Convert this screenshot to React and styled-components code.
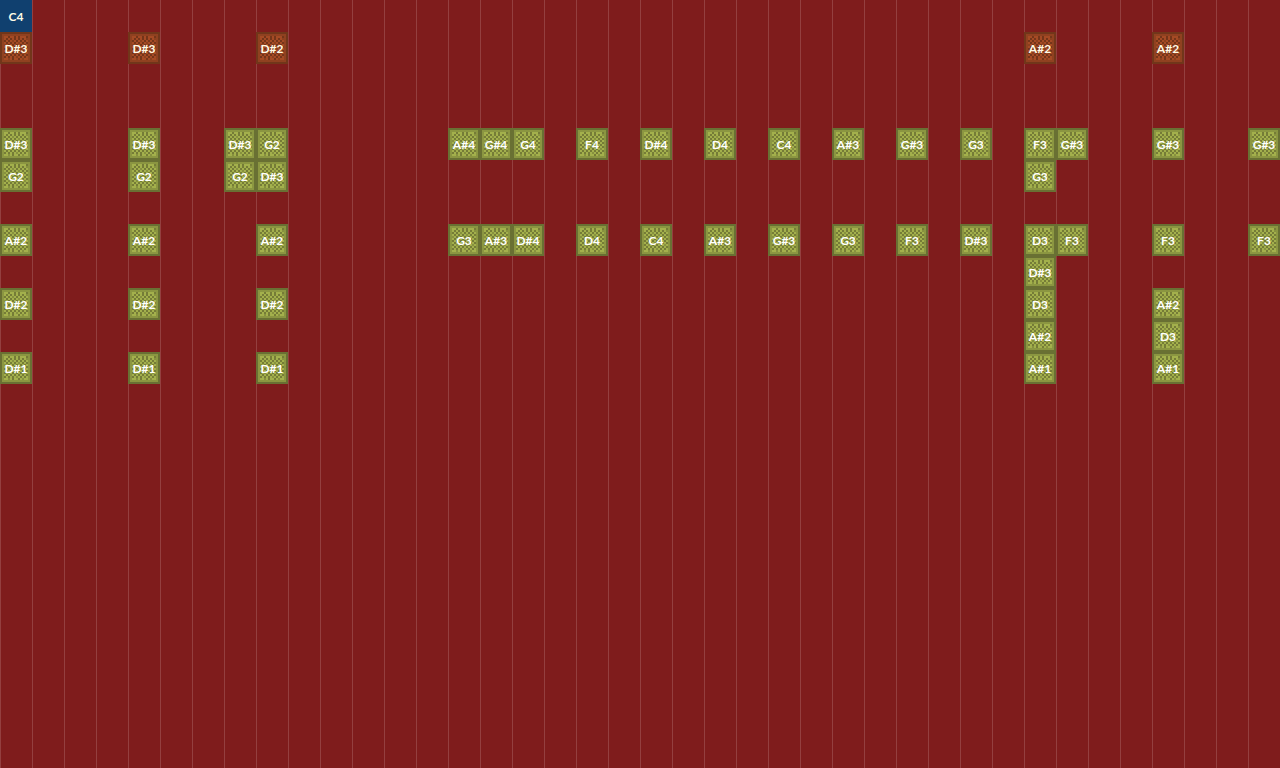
import React from "react";
import styled, { createGlobalStyle } from "styled-components";

const GlobalStyle = createGlobalStyle`
  body {
    margin: 0;
    background: #7f1c1c;
    overflow: hidden;
  }
`;

// 16x16 block texture, one letter per texel
const TEXTURE = [
  "dddddddddddddddd",
  "dffffffffffffffd",
  "dfllkllklklllkfd",
  "dflklklklklklmfd",
  "dfklklmlklklklfd",
  "dflklklklmlklkfd",
  "dfmlklklklklklfd",
  "dflklmlklklklkfd",
  "dfklklklklmlklfd",
  "dflklklmlklklkfd",
  "dfklmlklklklmlfd",
  "dflklklklklklkfd",
  "dfklklklmlklklfd",
  "dfllmlkllklmllfd",
  "dffffffffffffffd",
  "dddddddddddddddd",
];

const PALETTES = {
  green: { d: "#697033", k: "#757c37", m: "#87913f", f: "#8b9641", l: "#a3b04c" },
  orange: { d: "#71361a", k: "#74351a", m: "#8c401e", f: "#904120", l: "#a54a24" },
};

// every layer is one list of notes, each at a tick
const LAYERS = [
  { color: "blue", notes: { 0: "C4" } },
  { color: "orange", notes: { 0: "D#3", 4: "D#3", 8: "D#2", 32: "A#2", 36: "A#2" } },
  { notes: {} },
  { notes: {} },
  {
    color: "green",
    notes: {
      0: "D#3", 4: "D#3", 7: "D#3", 8: "G2", 14: "A#4", 15: "G#4", 16: "G4",
      18: "F4", 20: "D#4", 22: "D4", 24: "C4", 26: "A#3", 28: "G#3", 30: "G3",
      32: "F3", 33: "G#3", 36: "G#3", 39: "G#3",
    },
  },
  { color: "green", notes: { 0: "G2", 4: "G2", 7: "G2", 8: "D#3", 32: "G3" } },
  { notes: {} },
  {
    color: "green",
    notes: {
      0: "A#2", 4: "A#2", 8: "A#2", 14: "G3", 15: "A#3", 16: "D#4", 18: "D4",
      20: "C4", 22: "A#3", 24: "G#3", 26: "G3", 28: "F3", 30: "D#3", 32: "D3",
      33: "F3", 36: "F3", 39: "F3",
    },
  },
  { color: "green", notes: { 32: "D#3" } },
  { color: "green", notes: { 0: "D#2", 4: "D#2", 8: "D#2", 32: "D3", 36: "A#2" } },
  { color: "green", notes: { 32: "A#2", 36: "D3" } },
  { color: "green", notes: { 0: "D#1", 4: "D#1", 8: "D#1", 32: "A#1", 36: "A#1" } },
];

const Roll = styled.main`
  min-height: 100vh;
  background: repeating-linear-gradient(
    to right,
    #943f3f 0 1px,
    #7f1c1c 1px 32px
  );
`;

const Layer = styled.div`
  display: grid;
  grid-template-columns: repeat(auto-fill, 32px);
  height: 32px;
`;

const Note = styled.div`
  display: grid;
  grid-column: ${({ $tick }) => $tick + 1};
  grid-template-rows: 32px;
  place-items: center;
  background: ${({ $filled }) => ($filled ? "#10406f" : "none")};

  > * {
    grid-area: 1 / 1;
  }
`;

const Texture = styled.svg`
  display: block;
  width: 32px;
  height: 32px;
`;

const Label = styled.span`
  padding-top: 2px;
  color: ${({ $color }) => ($color === "green" ? "#ffffff" : "#fffbe6")};
  font: 700 12px/16px Lato, sans-serif;
  z-index: 1;
`;

const BlockTexture = ({ palette }) => (
  <Texture viewBox="0 0 16 16" shapeRendering="crispEdges" aria-hidden="true">
    {TEXTURE.map((line, y) =>
      line.split("").map((texel, x) => (
        <rect key={`${x}-${y}`} x={x} y={y} width="1" height="1" fill={palette[texel]} />
      ))
    )}
  </Texture>
);

const App = () => (
  <>
    <GlobalStyle />
    <Roll>
      {LAYERS.map(({ color, notes }, index) => (
        <Layer key={index}>
          {Object.entries(notes).map(([tick, name]) => (
            <Note key={tick} $tick={Number(tick)} $filled={color === "blue"}>
              {PALETTES[color] && <BlockTexture palette={PALETTES[color]} />}
              <Label $color={color}>{name}</Label>
            </Note>
          ))}
        </Layer>
      ))}
    </Roll>
  </>
);

export default App;
